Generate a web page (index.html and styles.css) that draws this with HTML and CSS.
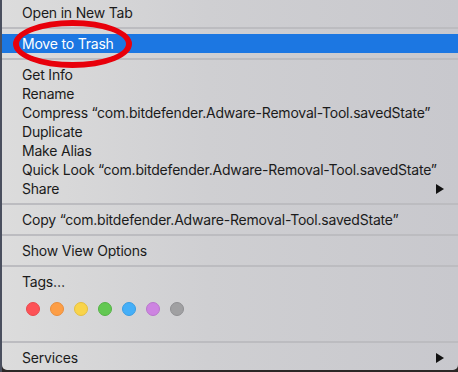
FILE: index.html
```html
<!DOCTYPE html>
<html lang="en">
<head>
    <meta charset="UTF-8">
    <title>Context Menu</title>
    <link rel="stylesheet" href="styles.css">
</head>
<body>
    <div class="menu">
        <div class="item">Open in New Tab</div>
        <div class="sep"></div>
        <div class="item active">Move to Trash</div>
        <div class="sep"></div>
        <div class="item">Get Info</div>
        <div class="item">Rename</div>
        <div class="item">Compress “com.bitdefender.Adware-Removal-Tool.savedState”</div>
        <div class="item">Duplicate</div>
        <div class="item">Make Alias</div>
        <div class="item">Quick Look “com.bitdefender.Adware-Removal-Tool.savedState”</div>
        <div class="item has-sub">Share <span class="arrow"></span></div>
        <div class="sep"></div>
        <div class="item">Copy “com.bitdefender.Adware-Removal-Tool.savedState”</div>
        <div class="sep"></div>
        <div class="item">Show View Options</div>
        <div class="sep"></div>
        <div class="item">Tags…</div>
        <div class="tags">
            <span class="dot red"></span>
            <span class="dot orange"></span>
            <span class="dot yellow"></span>
            <span class="dot green"></span>
            <span class="dot blue"></span>
            <span class="dot purple"></span>
            <span class="dot grey"></span>
        </div>
        <div class="sep"></div>
        <div class="item has-sub">Services <span class="arrow"></span></div>

        <!-- red circle drawn around the trash item -->
        <div class="highlight-ring"></div>
    </div>
</body>
</html>
```

FILE: styles.css
```css
* {
    margin: 0;
    padding: 0;
    box-sizing: border-box;
}

body {
    background: #2c2827;
    font-family: Inter, "Helvetica Neue", "Liberation Sans", sans-serif;
    color: #1b1b1b;
    width: 458px;
    height: 372px;
    overflow: hidden;
    border-left: 2px solid #4a4f5e;
}

.menu {
    position: relative;
    height: 370px;
    padding-top: 3px;
    background: linear-gradient(to right, #dcdcdc 0%, #cfcfd2 45%, #c8c8cd 100%);
    border-radius: 0 0 5px 5px;
}

.item {
    height: 19px;
    line-height: 19px;
    padding-left: 20px;
    padding-right: 14px;
    font-size: 14px;
    letter-spacing: -0.2px;
    white-space: nowrap;
    display: flex;
    justify-content: space-between;
    align-items: center;
}

.item.active {
    background: #1c77e2;
    color: white;
}

.sep {
    height: 2px;
    background: #bcbcc0;
    margin: 5px 0;
}

.arrow {
    width: 0;
    height: 0;
    border-top: 5px solid transparent;
    border-bottom: 5px solid transparent;
    border-left: 8px solid #111;
}

.tags {
    display: flex;
    gap: 10px;
    padding: 11px 0 20px 24px;
}

.dot {
    width: 14px;
    height: 14px;
    border-radius: 50%;
}

.red { background: #fd5257; border: 1px solid #e9484c; }
.orange { background: #fd9e46; border: 1px solid #e98e3c; }
.yellow { background: #f9d44b; border: 1px solid #e5bf3f; }
.green { background: #63c852; border: 1px solid #55b346; }
.blue { background: #45aff8; border: 1px solid #3a9de2; }
.purple { background: #cd84e1; border: 1px solid #b976cd; }
.grey { background: #a0a0a2; border: 1px solid #8f8f92; }

.highlight-ring {
    position: absolute;
    left: 11px;
    top: 20px;
    width: 119px;
    height: 48px;
    border: 6px solid #e8000b;
    border-radius: 50%;
}
```
